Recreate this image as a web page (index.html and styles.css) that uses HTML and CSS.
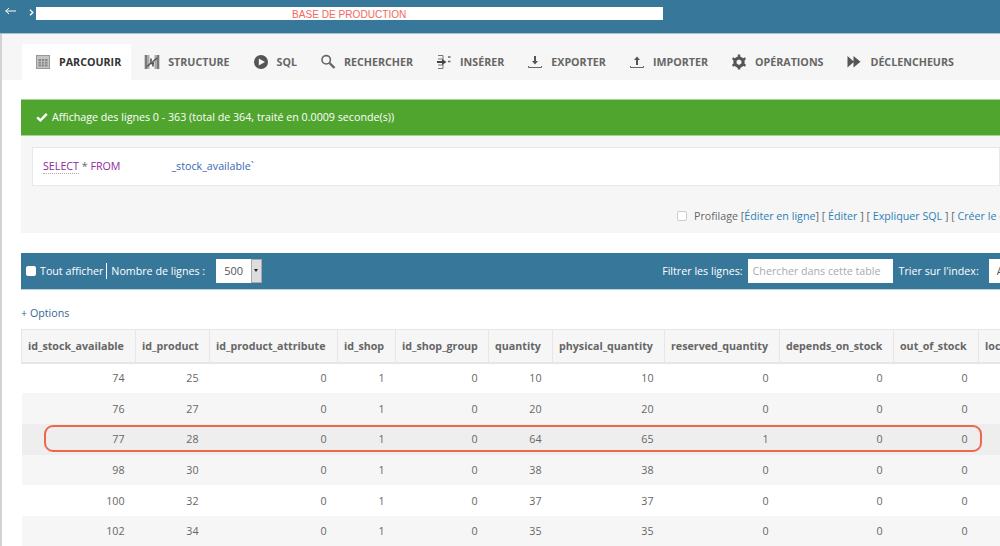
FILE: index.html
```html
<!DOCTYPE html>
<html lang="fr">
<head>
  <meta charset="UTF-8">
  <title>phpMyAdmin</title>
  <link rel="stylesheet" href="styles.css">
</head>
<body>
  <div class="topbar">
    <svg class="nav-back" width="11" height="8" viewBox="0 0 11 8"><path d="M0.5 4H11M4 1L0.8 4L4 7" fill="none" stroke="#fff" stroke-width="1"/></svg>
    <svg class="nav-next" width="5" height="7" viewBox="0 0 5 7"><path d="M1 0.8L3.8 3.5L1 6.2" fill="none" stroke="#fff" stroke-width="1.4"/></svg>
    <div class="breadcrumb">BASE DE PRODUCTION</div>
  </div>

  <div class="page">
    <div class="tabs">
      <a class="tab active">
        <svg class="icon" viewBox="0 0 16 16"><rect x="1.5" y="1.5" width="13" height="13" fill="#c4c4c4" stroke="#999"/><path d="M3.5 5h9v7.5h-9z" fill="#888"/><path d="M3.5 7.5h9M3.5 10h9M6.5 5v7.5M9.5 5v7.5" stroke="#ccc" stroke-width="0.7"/></svg>
        PARCOURIR
      </a>
      <a class="tab">
        <svg class="icon" viewBox="0 0 16 16"><rect x="0.5" y="1" width="5" height="14" fill="#aaa"/><rect x="10.5" y="1" width="5" height="14" fill="#aaa"/><path d="M2 1v14M14 1v14" stroke="#666" stroke-width="1.4"/><path d="M3 12.5L7 9V4.5M13 4L9 7.5V12.5M6 9.5h4" fill="none" stroke="#555" stroke-width="1.6"/></svg>
        STRUCTURE
      </a>
      <a class="tab">
        <svg class="icon" viewBox="0 0 16 16"><circle cx="8" cy="8" r="7" fill="#555"/><path d="M5.8 4.5L12 8L5.8 11.5z" fill="#f6f6f6"/></svg>
        SQL
      </a>
      <a class="tab">
        <svg class="icon" viewBox="0 0 16 16"><circle cx="6.2" cy="5.8" r="4.2" fill="none" stroke="#666" stroke-width="1.6"/><path d="M9.5 9L14.5 14" stroke="#666" stroke-width="2.4"/></svg>
        RECHERCHER
      </a>
      <a class="tab">
        <svg class="icon" viewBox="0 0 16 16"><path d="M2 1.5h5v13H2M2 5h5M2 11h5" fill="none" stroke="#777" stroke-width="1"/><path d="M1 8h6" stroke="#444" stroke-width="2"/><path d="M6 5L10.5 8L6 11z" fill="#444"/><path d="M12 3h2.5M12 7.5h2.5" stroke="#666" stroke-width="1.6"/></svg>
        INSÉRER
      </a>
      <a class="tab">
        <svg class="icon" viewBox="0 0 16 16"><path d="M8 2v6" stroke="#555" stroke-width="2"/><path d="M5 7h6L8 10.5z" fill="#555"/><path d="M1.5 12v1.5h13V12" fill="none" stroke="#666" stroke-width="1"/></svg>
        EXPORTER
      </a>
      <a class="tab">
        <svg class="icon" viewBox="0 0 16 16"><path d="M8 11V5" stroke="#555" stroke-width="2"/><path d="M5 6h6L8 2.5z" fill="#555"/><path d="M1.5 12v1.5h13V12" fill="none" stroke="#666" stroke-width="1"/></svg>
        IMPORTER
      </a>
      <a class="tab">
        <svg class="icon" viewBox="0 0 16 16"><path d="M8 3.6L12 6v4.4L8 12.8L4 10.4V6z" fill="none" stroke="#555" stroke-width="3.2"/><path d="M8 0.5v2M8 13.5v2M1.5 4.2l1.8 1M12.7 10.8l1.8 1M1.5 11.8l1.8-1M12.7 5.2l1.8-1" stroke="#555" stroke-width="2.4"/></svg>
        OPÉRATIONS
      </a>
      <a class="tab">
        <svg class="icon" viewBox="0 0 16 16"><path d="M1.5 2L8 7.8L1.5 13.5zM7.5 2L14.5 7.8L7.5 13.5z" fill="#555"/></svg>
        DÉCLENCHEURS
      </a>
    </div>

    <div class="content">
      <div class="success">
        <svg width="12" height="10" viewBox="0 0 12 10"><path d="M1.2 5.4L4.4 8.4L10.8 1.8" fill="none" stroke="#fff" stroke-width="2.4"/></svg>
        Affichage des lignes 0 - 363 (total de 364, traité en 0.0009 seconde(s))
      </div>

      <div class="query-panel">
        <div class="sql-box">
          <span class="kw kw-first">SELECT</span> <span class="star">*</span> <span class="kw">FROM</span><span class="tbl">_stock_available`</span>
        </div>
        <div class="query-links">
          <input type="checkbox" class="profil-check">
          <span>Profilage [<a>Éditer en ligne</a>] [ <a>Éditer</a> ] [ <a>Expliquer SQL</a> ] [ <a>Créer le code source PHP</a> ]</span>
        </div>
      </div>

      <div class="nav-bar">
        <input type="checkbox" class="show-all">
        <span class="show-label">Tout afficher</span>
        <span class="rows-label">Nombre de lignes :</span>
        <div class="rows-select"><span class="rows-value">500</span><span class="rows-arrow"></span></div>
        <span class="filter-label">Filtrer les lignes:</span>
        <input class="filter-input" placeholder="Chercher dans cette table">
        <span class="sort-label">Trier sur l'index:</span>
        <div class="sort-select">Aucun</div>
      </div>

      <a class="options">+ Options</a>

      <div class="table-wrap">
        <table class="data">
          <colgroup>
            <col class="c1"><col class="c2"><col class="c3"><col class="c4"><col class="c5"><col class="c6"><col class="c7"><col class="c8"><col class="c9"><col class="c10"><col class="c11">
          </colgroup>
          <thead>
            <tr>
              <th>id_stock_available</th><th>id_product</th><th>id_product_attribute</th><th>id_shop</th><th>id_shop_group</th><th>quantity</th><th>physical_quantity</th><th>reserved_quantity</th><th>depends_on_stock</th><th>out_of_stock</th><th>location</th>
            </tr>
          </thead>
          <tbody>
            <tr><td>74</td><td>25</td><td>0</td><td>1</td><td>0</td><td>10</td><td>10</td><td>0</td><td>0</td><td>0</td><td></td></tr>
            <tr class="even"><td>76</td><td>27</td><td>0</td><td>1</td><td>0</td><td>20</td><td>20</td><td>0</td><td>0</td><td>0</td><td></td></tr>
            <tr class="marked"><td>77</td><td>28</td><td>0</td><td>1</td><td>0</td><td>64</td><td>65</td><td>1</td><td>0</td><td>0</td><td></td></tr>
            <tr class="even"><td>98</td><td>30</td><td>0</td><td>1</td><td>0</td><td>38</td><td>38</td><td>0</td><td>0</td><td>0</td><td></td></tr>
            <tr><td>100</td><td>32</td><td>0</td><td>1</td><td>0</td><td>37</td><td>37</td><td>0</td><td>0</td><td>0</td><td></td></tr>
            <tr class="even"><td>102</td><td>34</td><td>0</td><td>1</td><td>0</td><td>35</td><td>35</td><td>0</td><td>0</td><td>0</td><td></td></tr>
          </tbody>
        </table>
        <div class="circled"></div>
      </div>
    </div>
  </div>
</body>
</html>
```

FILE: styles.css
```css
html, body {
  margin: 0;
  padding: 0;
  height: 546px;
  overflow: hidden;
}

body {
  font-family: "Open Sans", sans-serif;
  font-size: 10.7px;
  color: #555;
  background: #fff;
}

a {
  color: #2f7fb5;
}

.topbar {
  display: flex;
  align-items: flex-start;
  height: 33px;
  background: #37779a;
  border-bottom: 1px solid #a9c3d2;
  box-sizing: content-box;
}

.nav-back {
  margin: 7px 0 0 5px;
}

.nav-next {
  margin: 9px 0 0 13px;
}

.breadcrumb {
  width: 627px;
  height: 13px;
  margin: 7px 0 0 2px;
  background: #fff;
  color: #f2685c;
  font-family: "Liberation Sans", sans-serif;
  font-size: 10.1px;
  line-height: 15px;
  padding-left: 256px;
  box-sizing: border-box;
}

.page {
  height: 512px;
  border-left: 2px solid #d2d2d2;
  overflow: hidden;
}

.tabs {
  display: flex;
  height: 36px;
  padding: 10px 0 0 20px;
  background: #f6f6f6;
}

.tab {
  display: flex;
  align-items: center;
  padding: 0 10px 0 13px;
  font-weight: 700;
  color: #666;
}

.tab.active {
  background: #fff;
  color: #333;
}

.icon {
  width: 16px;
  height: 16px;
  margin-right: 8px;
}

.content {
  padding: 19px 0 0 19px;
}

.success {
  display: flex;
  align-items: center;
  gap: 4px;
  height: 37px;
  padding: 0 0 1px 15px;
  box-sizing: border-box;
  background: #50a52f;
  border-top: 1px solid #a5d295;
  border-bottom: 1px solid #a5d295;
  color: #fff;
}

.query-panel {
  height: 97px;
  padding: 11px 0 0 11px;
  box-sizing: border-box;
  background: #f6f6f6;
}

.sql-box {
  height: 39px;
  padding-left: 10px;
  box-sizing: border-box;
  background: #fff;
  border: 1px solid #e8e8e8;
  font-size: 10.7px;
  line-height: 37px;
}

.kw {
  color: #8e2a9c;
}

.kw-first {
  border-bottom: 1px dotted #aaa;
}

.star {
  color: #666;
}

.tbl {
  margin-left: 51px;
  color: #3768b0;
}

.query-links {
  display: flex;
  align-items: center;
  white-space: pre;
  margin-top: 21px;
  padding-left: 645px;
  height: 18px;
  color: #666;
  overflow: hidden;
}

.query-links a {
  color: #2f7fb5;
}

.profil-check {
  appearance: none;
  width: 10px;
  height: 10px;
  margin: 0 7px 0 0;
  background: #fff;
  border: 1px solid #ccc;
  border-radius: 2px;
  flex: none;
}

.nav-bar {
  display: flex;
  align-items: center;
  height: 37px;
  margin-top: 20px;
  box-sizing: border-box;
  background: #37779a;
  border-bottom: 1px solid #bcd2de;
  color: #fff;
  white-space: nowrap;
  overflow: hidden;
}

.show-all {
  appearance: none;
  width: 10px;
  height: 10px;
  margin: 0 4px 0 5px;
  background: #fff;
  border-radius: 2px;
  flex: none;
}

.show-label {
  padding-right: 3px;
  border-right: 1px solid #fff;
  line-height: 16px;
}

.rows-label {
  margin-left: 4px;
}

.rows-select {
  display: flex;
  flex: none;
  width: 46px;
  height: 24px;
  margin-left: 11px;
  background: #fff;
  color: #555;
}

.rows-value {
  width: 35px;
  padding-left: 8px;
  box-sizing: border-box;
  font-size: 11px;
  line-height: 24px;
}

.rows-arrow {
  position: relative;
  flex: 1;
  background: #ddd;
  border: 1px solid #aaa;
}

.rows-arrow::after {
  content: '';
  position: absolute;
  top: 9px;
  left: 2px;
  border: 2.5px solid transparent;
  border-top: 3px solid #222;
}

.filter-label {
  margin-left: 400px;
}

.filter-input {
  flex: none;
  width: 145px;
  height: 24px;
  margin-left: 5px;
  padding: 0 5px;
  box-sizing: border-box;
  border: none;
  font-family: inherit;
  font-size: 10.7px;
}

.filter-input::placeholder {
  color: #aaa;
}

.sort-label {
  margin-left: 6px;
}

.sort-select {
  flex: none;
  width: 80px;
  height: 24px;
  margin-left: 10px;
  padding-left: 8px;
  box-sizing: border-box;
  background: #fff;
  color: #555;
  line-height: 24px;
}

.options {
  display: block;
  margin-top: 15px;
  height: 16px;
  line-height: 16px;
  color: #37688f;
}

.table-wrap {
  position: relative;
  margin-top: 8px;
}

.data {
  table-layout: fixed;
  width: 1070px;
  border-collapse: collapse;
}

.c1 { width: 114px; }
.c2 { width: 74px; }
.c3 { width: 128px; }
.c4 { width: 58px; }
.c5 { width: 93px; }
.c6 { width: 64px; }
.c7 { width: 112px; }
.c8 { width: 115px; }
.c9 { width: 114px; }
.c10 { width: 85px; }
.c11 { width: 113px; }

.data th {
  height: 33px;
  padding: 0 0 0 6px;
  box-sizing: border-box;
  text-align: left;
  font-weight: 700;
  color: #666;
  background: #f6f6f6;
  border: 1px solid #e6e6e6;
  border-bottom-width: 2px;
  white-space: nowrap;
  overflow: hidden;
}

.data td {
  height: 30.7px;
  padding: 0 11px 0 0;
  text-align: right;
  color: #666;
  box-sizing: border-box;
}

.data .even td {
  background: #f6f6f6;
}

.data .marked td {
  background: #eee;
}

.circled {
  position: absolute;
  top: 95.5px;
  left: 23px;
  width: 938px;
  height: 27.5px;
  box-sizing: border-box;
  border: 2px solid #f0664c;
  border-radius: 9px;
}
```
